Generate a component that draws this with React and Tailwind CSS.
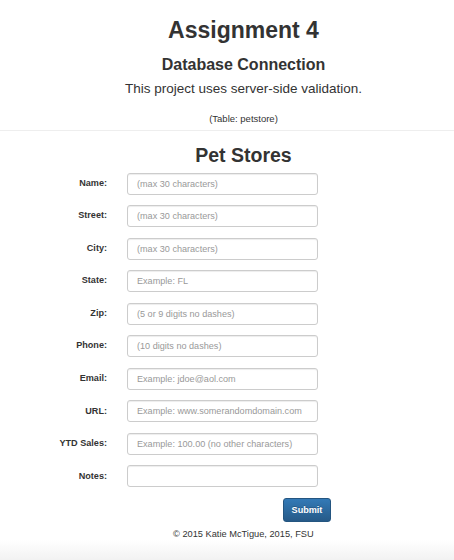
import React from "react";

const fields = [
  { label: "Name:", placeholder: "(max 30 characters)" },
  { label: "Street:", placeholder: "(max 30 characters)" },
  { label: "City:", placeholder: "(max 30 characters)" },
  { label: "State:", placeholder: "Example: FL" },
  { label: "Zip:", placeholder: "(5 or 9 digits no dashes)" },
  { label: "Phone:", placeholder: "(10 digits no dashes)" },
  { label: "Email:", placeholder: "Example: jdoe@aol.com" },
  { label: "URL:", placeholder: "Example: www.somerandomdomain.com" },
  { label: "YTD Sales:", placeholder: "Example: 100.00 (no other characters)" },
  { label: "Notes:", placeholder: "" },
];

const App = () => {
  return (
    <div
      className="min-h-[560px] flex flex-col bg-white text-[#333]"
      style={{ fontFamily: '"Liberation Sans", Arial, sans-serif' }}
    >
      {/* Cabecera */}
      <div className="flex flex-col items-center text-center pl-[33px]">
        <h1 className="mt-[19px] text-[23px] leading-[23px] font-bold">
          Assignment 4
        </h1>
        <h3 className="mt-[15px] text-[16px] leading-[16px] font-bold">
          Database Connection
        </h3>
        <p className="mt-[9px] text-[13.5px] leading-[14px]">
          This project uses server-side validation.
        </p>
        <p className="mt-[17.5px] text-[9.5px] leading-[9px]">(Table: petstore)</p>
      </div>

      <hr className="mt-[7px] border-0 border-t border-[#eee]" />

      <h2 className="mt-[14px] pl-[33px] text-center text-[19.5px] leading-[20px] font-bold">
        Pet Stores
      </h2>

      {/* Formulario */}
      <form className="mt-[8px] flex flex-col gap-[10.55px] pl-[8px]">
        {fields.map((f) => (
          <div key={f.label} className="flex items-center h-[22px]">
            <label className="w-[99px] text-right text-[9.1px] font-bold">
              {f.label}
            </label>
            <input
              className="ml-[20px] w-[191px] h-[22px] px-[9px] text-[9.1px] border border-[#ccc] rounded-[3px] shadow-[inset_0_1px_1px_rgba(0,0,0,0.075)] outline-none placeholder:text-[#999]"
              placeholder={f.placeholder}
            />
          </div>
        ))}
      </form>

      <div className="mt-[11px] pl-[283px] flex">
        <button
          type="button"
          className="w-[48px] h-[24px] text-white text-[9.1px] font-bold rounded-[3px] border border-[#245580] bg-gradient-to-b from-[#337ab7] to-[#265a88] [text-shadow:0_-1px_0_rgba(0,0,0,0.2)]"
        >
          Submit
        </button>
      </div>

      <p className="mt-[6px] pl-[173px] text-[9.25px] leading-[12px]">
        © 2015 Katie McTigue, 2015, FSU
      </p>

      <div className="mt-auto h-[20px] bg-gradient-to-b from-white to-[#f2f2f2]" />
    </div>
  );
};

export default App;
